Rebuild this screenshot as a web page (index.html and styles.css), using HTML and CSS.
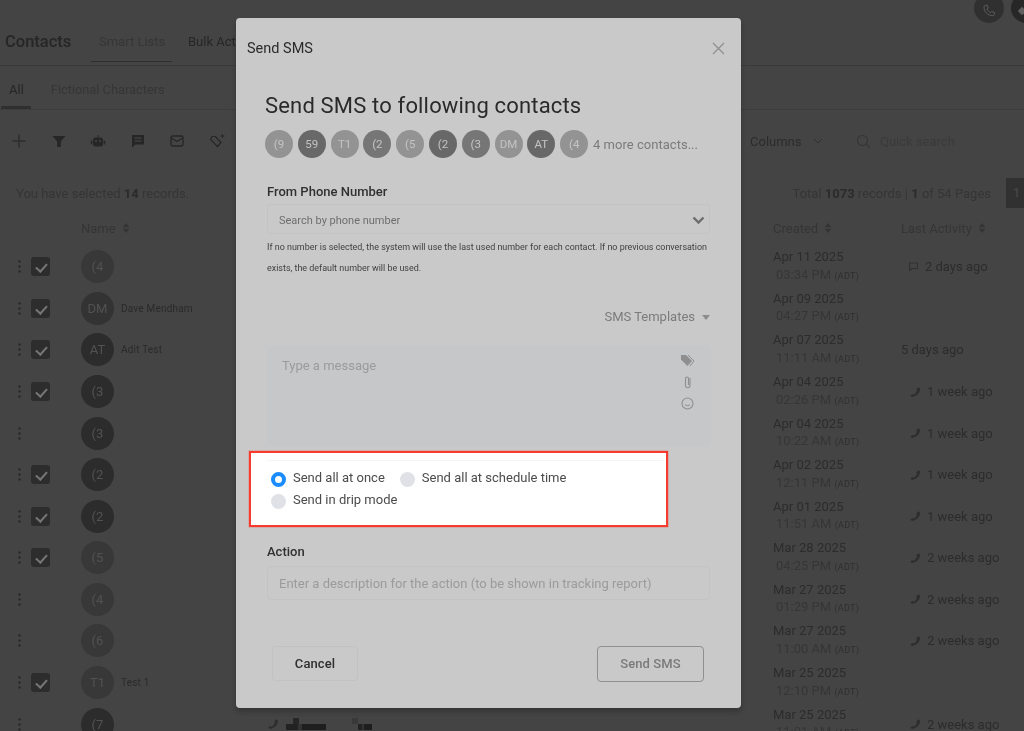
FILE: index.html
```html
<!DOCTYPE html>
<html lang="en">
<head>
<meta charset="utf-8">
<title>Send SMS</title>
<link rel="stylesheet" href="styles.css">
</head>
<body>
<svg class="defs" width="0" height="0" aria-hidden="true">
  <symbol id="phone" viewBox="0 0 12 12"><path d="M9.600 1.200 11 2.600c.2 3.900-3.200 8-8 8.400L1.300 9.600 3.500 8l1 .8C6.400 7.900 7.500 6.300 8 4.600l-.9-1z" fill="currentColor"/></symbol>
  <symbol id="sort" viewBox="0 0 9 12"><path d="M4.500 0 8.500 5H.5zM4.500 12 .5 7h8z" fill="currentColor"/></symbol>
</svg>

<div class="page">
  <div class="top">
    <span class="round call"><svg width="14" height="14" viewBox="0 0 14 14"><path d="M3 1.500 5 1l1.300 3-1.300 1c.6 1.600 2 3 3.700 3.700l1-1.300 3 1.300-.5 2c-.2.700-.7 1-1.300 1C5.800 11.500 2 8 2 3c0-.6.400-1.300 1-1.500z" fill="none" stroke="#5b5b5b" stroke-width="1"/></svg></span>
    <span class="round dial"><svg width="12" height="12" viewBox="0 0 12 12"><rect x="3" y="3" width="6" height="6" transform="rotate(45 6 6)" fill="#5f5f5f"/></svg></span>
  </div>
  <nav class="nav">
    <h1 class="brand">Contacts</h1>
    <a class="nav-tab nav-active">Smart Lists</a>
    <a class="nav-tab nav-dark">Bulk Actions</a>
  </nav>
  <div class="subtabs">
    <a class="subtab sub-active">All</a>
    <a class="subtab">Fictional Characters</a>
  </div>
  <div class="toolbar">
    <div class="tools">
      <svg class="tool" viewBox="0 0 16 16"><path d="M8 1.500v13M1.500 8h13" stroke="#2c2c2c" stroke-width="1.300" fill="none"/></svg>
      <svg class="tool" viewBox="0 0 16 16"><path d="M1.500 3h13L9.800 8.500V14H6.200V8.500z" fill="#262626"/></svg>
      <svg class="tool" viewBox="0 0 16 16"><rect x="3" y="4.500" width="10" height="9" rx="2.500" fill="#262626"/><rect x=".8" y="7.500" width="1.500" height="4" rx=".7" fill="#262626"/><rect x="13.700" y="7.500" width="1.500" height="4" rx=".7" fill="#262626"/><path d="M8 2v3" stroke="#262626"/><circle cx="6" cy="8" r=".9" fill="#4a4a4a"/><circle cx="10" cy="8" r=".9" fill="#4a4a4a"/></svg>
      <svg class="tool" viewBox="0 0 16 16"><path d="M2 2h12v9.500H5.500L2 14.500z" fill="#262626"/><path d="M4.500 5h7M4.500 8h7" stroke="#4a4a4a"/></svg>
      <svg class="tool" viewBox="0 0 16 16"><rect x="2" y="3" width="12" height="10" rx="1.500" fill="none" stroke="#262626" stroke-width="1.300"/><path d="M2.500 5 8 8.500 13.500 5" fill="none" stroke="#262626" stroke-width="1.300"/></svg>
      <svg class="tool" viewBox="0 0 16 16"><path d="M1.500 6.500 3 3.500 6.500 3.500 12 9.500 8.500 13.500z" fill="none" stroke="#262626" stroke-width="1.200"/><path d="M13.500 1v4M11.500 3h4" stroke="#262626"/></svg>
    </div>
    <div class="tools-right">
      <span class="columns">Columns</span>
      <svg class="chev" width="10" height="6" viewBox="0 0 10 6"><path d="M1 1l4 4 4-4" fill="none" stroke="#303030"/></svg>
      <svg class="search-icon" width="15" height="15" viewBox="0 0 15 15"><circle cx="6.500" cy="6.500" r="5" fill="none" stroke="#353535" stroke-width="1.100"/><path d="M10.200 10.200 14 14" stroke="#353535" stroke-width="1.100"/></svg>
      <span class="quick">Quick search</span>
    </div>
  </div>
  <div class="selbar">
    <span>You have selected <b>14</b> records.</span>
    <span class="selbar-right"><span>Total <b>1073</b> records | <b>1</b> of 54 Pages</span><span class="pagebtn">1</span></span>
  </div>
  <div class="row head">
    <span class="c-name">Name <svg class="sort"><use href="#sort"/></svg></span>
    <span class="c-created">Created <svg class="sort"><use href="#sort"/></svg></span>
    <span class="c-act">Last Activity <svg class="sort"><use href="#sort"/></svg></span>
  </div>

  <div class="row"><span class="dots"></span><span class="chk on"></span><span class="av a1">(4</span><span class="nm"></span><span class="c-created"><span class="d">Apr 11 2025</span><span class="t">03:34 PM <small>(ADT)</small></span></span><span class="c-act"><svg class="msg" width="9" height="9" viewBox="0 0 9 9"><path d="M.500 1h8v5.500H3L.500 8.500z" fill="none" stroke="#303030" stroke-width="1.200"/></svg>2 days ago</span></div>
  <div class="row"><span class="dots"></span><span class="chk on"></span><span class="av a2">DM</span><span class="nm">Dave Mendham</span><span class="c-created"><span class="d">Apr 09 2025</span><span class="t">04:27 PM <small>(ADT)</small></span></span><span class="c-act"></span></div>
  <div class="row"><span class="dots"></span><span class="chk on"></span><span class="av a3">AT</span><span class="nm">Adit Test</span><span class="c-created"><span class="d">Apr 07 2025</span><span class="t">11:11 AM <small>(ADT)</small></span></span><span class="c-act plain">5 days ago</span></div>
  <div class="row"><span class="dots"></span><span class="chk on"></span><span class="av a3">(3</span><span class="nm"></span><span class="c-created"><span class="d">Apr 04 2025</span><span class="t">02:26 PM <small>(ADT)</small></span></span><span class="c-act"><svg class="ph"><use href="#phone"/></svg>1 week ago</span></div>
  <div class="row"><span class="dots"></span><span class="chk"></span><span class="av a3">(3</span><span class="nm"></span><span class="c-created"><span class="d">Apr 04 2025</span><span class="t">10:22 AM <small>(ADT)</small></span></span><span class="c-act"><svg class="ph"><use href="#phone"/></svg>1 week ago</span></div>
  <div class="row"><span class="dots"></span><span class="chk on"></span><span class="av a3">(2</span><span class="nm"></span><span class="c-created"><span class="d">Apr 02 2025</span><span class="t">12:11 PM <small>(ADT)</small></span></span><span class="c-act"><svg class="ph"><use href="#phone"/></svg>1 week ago</span></div>
  <div class="row"><span class="dots"></span><span class="chk on"></span><span class="av a3">(2</span><span class="nm"></span><span class="c-created"><span class="d">Apr 01 2025</span><span class="t">11:51 AM <small>(ADT)</small></span></span><span class="c-act"><svg class="ph"><use href="#phone"/></svg>1 week ago</span></div>
  <div class="row"><span class="dots"></span><span class="chk on"></span><span class="av a1">(5</span><span class="nm"></span><span class="c-created"><span class="d">Mar 28 2025</span><span class="t">04:25 PM <small>(ADT)</small></span></span><span class="c-act"><svg class="ph"><use href="#phone"/></svg>2 weeks ago</span></div>
  <div class="row"><span class="dots"></span><span class="chk"></span><span class="av a1">(4</span><span class="nm"></span><span class="c-created"><span class="d">Mar 27 2025</span><span class="t">01:29 PM <small>(ADT)</small></span></span><span class="c-act"><svg class="ph"><use href="#phone"/></svg>2 weeks ago</span></div>
  <div class="row"><span class="dots"></span><span class="chk"></span><span class="av a1">(6</span><span class="nm"></span><span class="c-created"><span class="d">Mar 27 2025</span><span class="t">11:00 AM <small>(ADT)</small></span></span><span class="c-act"><svg class="ph"><use href="#phone"/></svg>2 weeks ago</span></div>
  <div class="row"><span class="dots"></span><span class="chk on"></span><span class="av a1">T1</span><span class="nm">Test 1</span><span class="c-created"><span class="d">Mar 25 2025</span><span class="t">12:10 PM <small>(ADT)</small></span></span><span class="c-act"></span></div>
  <div class="row"><span class="dots"></span><span class="chk"></span><span class="av a3">(7</span><span class="nm"></span><span class="c-created"><span class="d">Mar 25 2025</span><span class="t">11:01 AM <small>(ADT)</small></span></span><span class="c-act"><svg class="ph"><use href="#phone"/></svg>2 weeks ago</span></div>
</div>

<div class="under">
  <svg class="ph under-ph"><use href="#phone"/></svg>
  <span class="mask m1"></span>
  <span class="mask m2"></span>
</div>

<section class="modal">
  <header class="modal-head">
    <h2 class="modal-title">Send SMS</h2>
    <svg class="close" width="13" height="13" viewBox="0 0 13 13"><path d="M1 1l11 11M12 1 1 12" stroke="#8e8e8e" stroke-width="1.200"/></svg>
  </header>
  <div class="modal-body">
    <h3 class="big">Send SMS to following contacts</h3>
    <div class="chips">
      <span class="chip c-l">(9</span><span class="chip c-d">59</span><span class="chip c-l">T1</span><span class="chip c-m">(2</span><span class="chip c-l">(5</span><span class="chip c-d">(2</span><span class="chip c-m">(3</span><span class="chip c-l">DM</span><span class="chip c-d">AT</span><span class="chip c-l">(4</span>
      <span class="more">4 more contacts...</span>
    </div>
    <div class="form">
      <label class="label label-from">From Phone Number</label>
      <div class="select">
        <span>Search by phone number</span>
        <svg width="13" height="9" viewBox="0 0 13 9"><path d="M1.500 1.500 6.500 6.500 11.500 1.500" fill="none" stroke="#6d6d6d" stroke-width="2.400"/></svg>
      </div>
      <p class="help">If no number is selected, the system will use the last used number for each contact. If no previous conversation exists, the default number will be used.</p>
      <div class="templates"><span>SMS Templates</span><i class="tri"></i></div>
      <div class="message">
        <span>Type a message</span>
        <div class="msg-icons">
          <svg width="15" height="13" viewBox="0 0 15 13"><path d="M1 1h5l6 6-4.500 5L1 5.500z" fill="#8f8f8f"/><path d="M8 1l6 6-4 5" fill="none" stroke="#8f8f8f"/></svg>
          <svg width="10" height="14" viewBox="0 0 10 14"><path d="M7 3v7.500a2.200 2.200 0 0 1-4.500 0V3.500a1.500 1.500 0 0 1 3 0V10" fill="none" stroke="#8f8f8f" stroke-width="1.100"/></svg>
          <svg width="13" height="13" viewBox="0 0 13 13"><circle cx="6.500" cy="6.500" r="5.500" fill="none" stroke="#8f8f8f" stroke-width="1.100"/><path d="M4 7.500c1.200 1.600 3.800 1.600 5 0" fill="none" stroke="#8f8f8f"/></svg>
        </div>
      </div>
    </div>
    <div class="callout">
      <div class="callout-line"></div>
      <div class="opts">
        <label class="opt"><i class="radio radio-on"></i>Send all at once</label>
        <label class="opt"><i class="radio"></i>Send all at schedule time</label>
      </div>
      <div class="opts">
        <label class="opt"><i class="radio"></i>Send in drip mode</label>
      </div>
    </div>
    <div class="form">
      <label class="label label-action">Action</label>
      <div class="action">Enter a description for the action (to be shown in tracking report)</div>
    </div>
    <div class="buttons">
      <button class="btn btn-cancel">Cancel</button>
      <button class="btn btn-send">Send SMS</button>
    </div>
  </div>
</section>
</body>
</html>
```
FILE: styles.css
```css
* { box-sizing: border-box; }
html, body { margin: 0; height: 100%; }
body { background: #444; overflow: hidden; font-family: Roboto, "Liberation Sans", sans-serif; color: #2b2b2b; }
.defs { position: absolute; }
h1, h2, h3, p { margin: 0; font-weight: 400; }

.page { width: 1024px; height: 731px; overflow: hidden; filter: blur(.45px); }
.top { height: 22px; display: flex; justify-content: flex-end; gap: 7px; margin-right: -17px; }
.round { width: 30px; height: 30px; border-radius: 50%; background: #303030; margin-top: -7px; display: flex; align-items: center; justify-content: center; flex: none; }
.call { padding-top: 6px; }
.dial { padding: 6px 8px 0 0; background: #272727; }

.nav { height: 44px; display: flex; align-items: center; border-bottom: 1px solid #3b3b3b; padding: 0 0 4px 5px; position: relative; }
.brand { font-size: 16.500px; font-weight: 500; color: #262626; width: 94px; }
.nav-tab { font-size: 13px; color: #363636; white-space: nowrap; }
.nav-active { width: 89px; position: relative; height: 100%; display: flex; align-items: center; }
.nav-active::after { content: ""; position: absolute; left: -8px; right: 16px; bottom: -1px; height: 1px; background: #2f2f2f; }
.nav-dark { color: #262626; }

.subtabs { height: 44px; display: flex; align-items: center; gap: 27px; padding: 4px 0 0 9px; border-bottom: 1px solid #3d3d3d; }
.subtab { font-size: 12.800px; color: #363636; position: relative; height: 100%; display: flex; align-items: center; }
.sub-active { color: #262626; font-size: 13px; }
.sub-active::after { content: ""; position: absolute; left: -8px; right: -7px; bottom: 0; height: 3px; background: #2f2f2f; }

.toolbar { height: 62px; display: flex; justify-content: space-between; align-items: center; }
.tools { display: flex; gap: 23.500px; padding-left: 11px; }
.tool { width: 16px; height: 16px; display: block; }
.tools-right { display: flex; align-items: center; width: 274px; font-size: 13px; }
.columns { color: #2c2c2c; width: 66px; }
.chev { margin-left: -3px; margin-right: 33px; }
.search-icon { margin-right: 9px; }
.quick { color: #3a3a3a; }

.selbar { height: 30px; margin-top: 6px; display: flex; justify-content: space-between; align-items: center; padding-left: 16px; font-size: 13px; color: #353535; }
.selbar b { font-weight: 700; color: #2b2b2b; }
.selbar-right { display: flex; align-items: center; gap: 15px; height: 100%; }
.pagebtn { width: 18px; height: 100%; background: #313131; color: #4c4c4c; padding: 7px 0 0 7px; }

.row { height: 41.580px; display: flex; align-items: center; position: relative; }
.head { height: 38px; padding-top: 2px; font-size: 13px; color: #353535; }
.head .c-name { margin-left: 81px; width: 692px; display: flex; align-items: center; gap: 6px; }
.head .c-created { display: flex; align-items: center; gap: 6px; }
.sort { width: 8px; height: 10px; color: #343434; }
.dots { width: 3px; height: 15px; margin: 0 10px 0 18px; background: radial-gradient(circle, #2e2e2e 1.200px, transparent 1.500px) 0 0/3px 5px; }
.chk { width: 19px; height: 19px; border-radius: 3px; margin-right: 31px; position: relative; }
.chk.on { background: #2d2d2d; }
.chk.on::after { content: ""; position: absolute; left: 7px; top: 4px; width: 5px; height: 9px; border: solid #767676; border-width: 0 2.600px 2.600px 0; transform: rotate(42deg); }
.av { width: 33px; height: 33px; border-radius: 50%; display: flex; align-items: center; justify-content: center; font-size: 13px; color: #525252; flex: none; margin-right: 7px; }
.a1 { background: #383838; }
.a2 { background: #333; }
.a3 { background: #2c2c2c; }
.nm { width: 652px; font-size: 10px; color: #2a2a2a; letter-spacing: .2px; }
.c-created { width: 128px; flex: none; font-size: 13px; }
.d, .t { display: block; line-height: 17.500px; white-space: nowrap; }
.d { color: #2c2c2c; }
.t { color: #363636; padding-left: 3px; }
.t small { font-size: 9px; color: #2f2f2f; letter-spacing: .3px; }
.c-act { font-size: 13px; color: #2c2c2c; display: flex; align-items: center; white-space: nowrap; padding-left: 8px; }
.head .c-act { padding-left: 0; gap: 6px; color: #353535; }
.c-act.plain { padding-left: 0; }
.ph { width: 12px; height: 12px; color: #2e2e2e; margin-right: 6px; flex: none; }
.msg { margin: 0 7px 0 0; }

.under { position: absolute; left: 0; top: 717px; width: 1024px; height: 14px; filter: blur(.45px); }
.under-ph { position: absolute; left: 267px; top: 1px; margin: 0; }
.mask { position: absolute; background: linear-gradient(90deg, #222 0 30%, #333 30% 40%, #1e1e1e 40% 100%); height: 6px; top: 7px; }
.mask::before { content: ""; position: absolute; background: #262626; bottom: 100%; width: 6px; height: 6px; }
.m1 { left: 286px; width: 40px; }
.m1::before { left: 7px; }
.m2 { left: 358px; width: 14px; }
.m2::before { left: -6px; background: #393939; }

.modal { position: absolute; left: 236px; top: 18px; width: 505px; height: 690px; background: #c9c9c9; border-radius: 4px; box-shadow: 0 4px 5px rgba(0, 0, 0, .22); filter: blur(.3px); }
.modal-head { height: 60px; display: flex; justify-content: space-between; align-items: center; padding: 0 16px 0 11px; }
.modal-title { font-size: 14.500px; color: #2b2b2b; }
.close { margin-top: 1px; }
.modal-body { padding: 0 31px 0 29px; }
.big { font-size: 22px; line-height: 28px; color: #2a2a2a; letter-spacing: .17px; margin-top: 14px; }
.chips { display: flex; align-items: center; gap: 4.800px; margin-top: 10px; height: 28px; }
.chip { width: 28px; height: 28px; border-radius: 50%; display: flex; align-items: center; justify-content: center; font-size: 11.500px; color: #c4c4c4; flex: none; }
.c-l { background: #939393; }
.c-m { background: #767676; }
.c-d { background: #686868; }
.more { font-size: 13px; color: #7b7b7b; letter-spacing: .03px; white-space: nowrap; }

.form { padding-left: 2px; }
.label { display: block; font-size: 13px; font-weight: 500; color: #303030; line-height: 16px; }
.label-from { margin-top: 26px; }
.select { height: 30px; margin-top: 4px; border: 1px solid #c3c3c3; border-radius: 3px; display: flex; justify-content: space-between; align-items: center; padding: 2px 4px 0 11px; font-size: 11px; color: #6e6e6e; }
.help { font-size: 8.950px; line-height: 20.500px; color: #3f3f3f; margin-top: 3px; }
.templates { display: flex; justify-content: flex-end; align-items: center; gap: 7px; font-size: 13px; color: #7b7b7b; margin-top: 31px; line-height: 16px; }
.tri { width: 0; height: 0; border: 4.500px solid transparent; border-top: 5px solid #8c8c8c; border-bottom: 0; }
.message { height: 100px; margin-top: 21px; background: #c6c7c9; border-radius: 4px; display: flex; justify-content: space-between; padding: 12px 15px; font-size: 13px; color: #9b9b9b; }
.msg-icons { display: flex; flex-direction: column; align-items: center; gap: 8px; margin-top: -4px; }

.callout { margin: 5px -11px 0 -16px; height: 76px; width: 419px; background: #fff; border: 2px solid #f63b30; padding: 13px 0 0 20px; color: #4b4b4b; font-size: 13px; position: relative; box-shadow: 0 0 0 .5px rgba(246, 59, 48, .4); }
.callout-line { position: absolute; left: 16px; right: 3px; top: 7px; height: 1px; background: #f5f5f5; }
.opts { display: flex; height: 22px; align-items: center; gap: 15px; }
.opt { display: flex; align-items: center; gap: 7px; }
.radio { width: 15px; height: 15px; border-radius: 50%; background: #dfe1e6; margin-top: 4px; }
.radio-on { background: #fff; border: 4.500px solid #1a8cff; }

.label-action { margin-top: 17px; }
.action { height: 34px; margin-top: 6px; border: 1px solid #c3c3c3; border-radius: 4px; display: flex; align-items: center; padding-left: 11px; font-size: 13px; color: #9b9b9b; }
.buttons { display: flex; justify-content: space-between; margin-top: 46px; padding: 0 6px 0 7px; }
.btn { font: 500 13px Roboto, "Liberation Sans", sans-serif; background: transparent; border-radius: 4px; height: 35px; letter-spacing: .1px; }
.btn-cancel { width: 86px; border: 1px solid #c2c2c2; color: #2e2e2e; }
.btn-send { width: 107px; height: 36px; padding-bottom: 2px; border: 1px solid #8f8f8f; color: #7a7a7a; }
```
